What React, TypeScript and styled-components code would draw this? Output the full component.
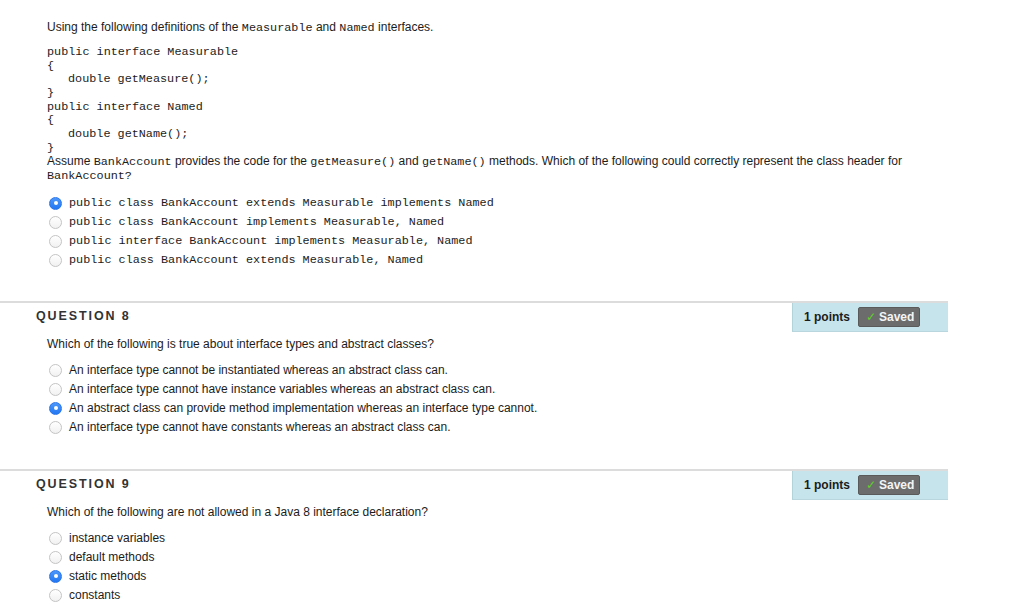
import React, { FC } from 'react';
import styled, { createGlobalStyle } from 'styled-components';

const GlobalStyle = createGlobalStyle`
  html, body {
    margin: 0;
    padding: 0;
    background: #ffffff;
  }
  body {
    font-family: 'Liberation Sans', Arial, sans-serif;
    color: #1c1c1c;
  }
`;

const Page = styled.div({
  width: '1024px',
  height: '612px',
  overflow: 'hidden',
  paddingTop: '20px',
  boxSizing: 'border-box',
});

const Intro = styled.div({
  paddingLeft: '47px',
  fontSize: '12px',
  lineHeight: '14px',
});

const Code = styled.span({
  fontFamily: "'Liberation Mono', 'Courier New', monospace",
  fontSize: '11.8px',
});

const CodeBlock = styled.div({
  marginTop: '11px',
  paddingLeft: '47px',
  fontSize: '12px',
  lineHeight: '13.67px',
});

const CodeLine = styled.div<{ $indent?: boolean }>(({ $indent }) => ({
  fontFamily: "'Liberation Mono', 'Courier New', monospace",
  fontSize: '11.8px',
  whiteSpace: 'pre',
  paddingLeft: $indent ? '21px' : 0,
}));

const OptionList = styled.div<{ $top: number }>(({ $top }) => ({
  marginTop: `${$top}px`,
  paddingLeft: '49px',
  display: 'flex',
  flexDirection: 'column',
}));

const OptionRow = styled.label({
  display: 'flex',
  alignItems: 'center',
  height: '19px',
  fontSize: '12px',
  gap: '7px',
});

const Radio = styled.span<{ $checked?: boolean }>(({ $checked }) => ({
  width: '13px',
  height: '13px',
  borderRadius: '50%',
  boxSizing: 'border-box',
  flexShrink: 0,
  display: 'flex',
  alignItems: 'center',
  justifyContent: 'center',
  border: $checked ? '1px solid #2a76ea' : '1px solid #c4c4c4',
  background: $checked
    ? 'linear-gradient(#4c97fb, #2377f2)'
    : 'linear-gradient(#ffffff, #f1f1f1)',
  '&::after': {
    content: '""',
    display: $checked ? 'block' : 'none',
    width: '4px',
    height: '4px',
    borderRadius: '50%',
    background: '#ffffff',
  },
}));

const OptionText = styled.span<{ $mono?: boolean }>(({ $mono }) => ({
  fontFamily: $mono
    ? "'Liberation Mono', 'Courier New', monospace"
    : "'Liberation Sans', Arial, sans-serif",
  fontSize: $mono ? '11.8px' : '12px',
  whiteSpace: 'pre',
}));

const QuestionBlock = styled.section<{ $top: number }>(({ $top }) => ({
  marginTop: `${$top}px`,
  width: '948px',
}));

const Header = styled.div({
  display: 'flex',
  alignItems: 'stretch',
  justifyContent: 'space-between',
  borderTop: '2px solid #dcdcdc',
  height: '29px',
});

const QuestionTitle = styled.h3({
  margin: 0,
  paddingLeft: '36px',
  paddingBottom: '2px',
  display: 'flex',
  alignItems: 'center',
  fontSize: '12.5px',
  fontWeight: 700,
  letterSpacing: '1.9px',
  color: '#333333',
});

const PointsBox = styled.div({
  width: '156px',
  boxSizing: 'border-box',
  background: '#c6e4eb',
  borderLeft: '1px solid #b3d3db',
  borderBottom: '1px solid #b9d6de',
  display: 'flex',
  alignItems: 'center',
  paddingLeft: '11px',
  gap: '8px',
});

const Points = styled.span({
  fontSize: '12px',
  fontWeight: 700,
  color: '#1c1c1c',
});

const SavedBadge = styled.span({
  display: 'flex',
  alignItems: 'center',
  gap: '3px',
  width: '62px',
  height: '20px',
  boxSizing: 'border-box',
  paddingLeft: '7px',
  background: '#6c6c6c',
  border: '1px solid #5a5a5a',
  borderRadius: '2px',
  color: '#f4f4f4',
  fontSize: '12px',
  fontWeight: 700,
});

const Check = styled.span({
  color: '#5fd02a',
  fontSize: '12px',
  fontWeight: 400,
});

const Prompt = styled.p({
  margin: '5px 0 0',
  paddingLeft: '47px',
  fontSize: '12px',
  lineHeight: '14px',
});

interface Question {
  readonly num: number;
  readonly prompt: string;
  readonly options: string[];
  readonly answer: number;
}

const questions: Question[] = [
  {
    num: 8,
    prompt: 'Which of the following is true about interface types and abstract classes?',
    options: [
      'An interface type cannot be instantiated whereas an abstract class can.',
      'An interface type cannot have instance variables whereas an abstract class can.',
      'An abstract class can provide method implementation whereas an interface type cannot.',
      'An interface type cannot have constants whereas an abstract class can.',
    ],
    answer: 2,
  },
  {
    num: 9,
    prompt: 'Which of the following are not allowed in a Java 8 interface declaration?',
    options: ['instance variables', 'default methods', 'static methods', 'constants'],
    answer: 2,
  },
];

const q7Options = [
  'public class BankAccount extends Measurable implements Named',
  'public class BankAccount implements Measurable, Named',
  'public interface BankAccount implements Measurable, Named',
  'public class BankAccount extends Measurable, Named',
];

const Options: FC<{ items: string[]; answer: number; mono?: boolean; top: number }> = ({
  items, answer, mono, top,
}) => (
  <OptionList $top={top}>
    {items.map((text, i) => (
      <OptionRow key={text}>
        <Radio $checked={i === answer} />
        <OptionText $mono={mono}>{text}</OptionText>
      </OptionRow>
    ))}
  </OptionList>
);

const QuestionCard: FC<{ q: Question; top: number }> = ({ q, top }) => (
  <QuestionBlock $top={top}>
    <Header>
      <QuestionTitle>QUESTION {q.num}</QuestionTitle>
      <PointsBox>
        <Points>1 points</Points>
        <SavedBadge>
          <Check>✓</Check>
          Saved
        </SavedBadge>
      </PointsBox>
    </Header>
    <Prompt>{q.prompt}</Prompt>
    <Options items={q.options} answer={q.answer} top={10} />
  </QuestionBlock>
);

const App: FC = () => (
  <Page>
    <GlobalStyle />
    <Intro>
      Using the following definitions of the <Code>Measurable</Code> and <Code>Named</Code> interfaces.
    </Intro>
    <CodeBlock>
      <CodeLine>public interface Measurable</CodeLine>
      <CodeLine>{'{'}</CodeLine>
      <CodeLine $indent>double getMeasure();</CodeLine>
      <CodeLine>{'}'}</CodeLine>
      <CodeLine>public interface Named</CodeLine>
      <CodeLine>{'{'}</CodeLine>
      <CodeLine $indent>double getName();</CodeLine>
      <CodeLine>{'}'}</CodeLine>
      <div>
        Assume <Code>BankAccount</Code> provides the code for the <Code>getMeasure()</Code> and{' '}
        <Code>getName()</Code> methods. Which of the following could correctly represent the class header for
      </div>
      <CodeLine>BankAccount?</CodeLine>
    </CodeBlock>
    <Options items={q7Options} answer={0} mono top={10} />
    <QuestionCard q={questions[0]} top={31} />
    <QuestionCard q={questions[1]} top={32} />
  </Page>
);

export default App;
